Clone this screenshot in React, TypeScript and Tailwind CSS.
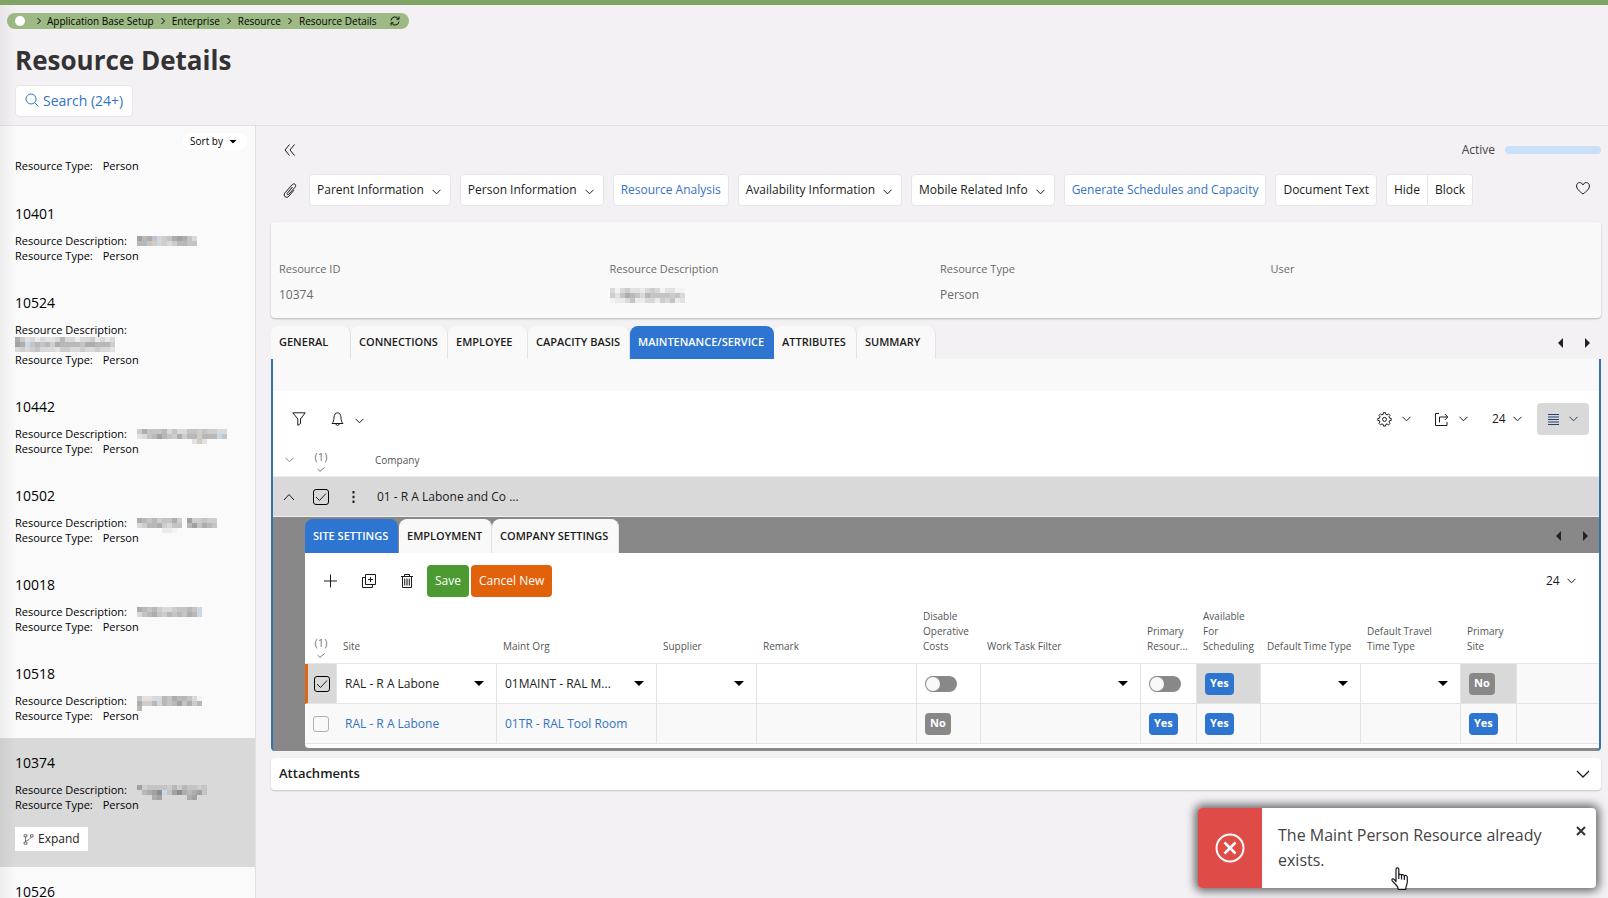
import type { ReactNode } from 'react';

type IconProps = { className?: string };

const Svg = ({ w, h, box, className = '', sw = 1, children }: { w: number; h: number; box?: string; className?: string; sw?: number; children: ReactNode }) => (
  <svg width={w} height={h} viewBox={box ?? `0 0 ${w} ${h}`} className={`shrink-0 ${className}`} fill="none" stroke="currentColor" strokeWidth={sw} aria-hidden="true">
    {children}
  </svg>
);

const Chevron = ({ className = '' }: IconProps) => (
  <Svg w={9} h={6} className={className}><path d="M.5 .8l4 4 4-4" /></Svg>
);
const Caret = ({ className = '' }: IconProps) => (
  <Svg w={10} h={5} className={className}><path d="M0 0h10L5 5z" fill="currentColor" stroke="none" /></Svg>
);
const Arrow = ({ dir }: { dir: 'left' | 'right' }) => (
  <Svg w={5} h={10}><path d={dir === 'left' ? 'M5 0v10L0 5z' : 'M0 0v10l5-5z'} fill="currentColor" stroke="none" /></Svg>
);
const SmallCheck = () => (
  <Svg w={8} h={5}><path d="M.5 2l2.5 2.4L7.5.5" /></Svg>
);

/* Pixelated name: each character is one 5px block, 0 = lightest, 9 = darkest. */
const SHADES: Record<string, string> = {
  '0': '#f3f3f3', '1': '#ebebeb', '2': '#e2e2e3', '3': '#d8d9da', '4': '#cfcdcc',
  '5': '#c4c4c6', '6': '#b9b8b8', '7': '#aeadae', '8': '#a2a0a1', '9': '#8e8d90',
  b: '#c9d8e4', t: '#d5cbc5',
};
const Mosaic = ({ rows, className = '' }: { rows: string[]; className?: string }) => (
  <svg width={rows[0].length * 5} height={rows.length * 5} className={`shrink-0 ${className}`} shapeRendering="crispEdges" role="img" aria-label="Hidden name">
    {rows.map((row, y) =>
      row.split('').map((c, x) => (c === '.' ? null : <rect key={`${x}-${y}`} x={x * 5} y={y * 5} width={5} height={5} fill={SHADES[c]} />)),
    )}
  </svg>
);

const crumbs = ['Application Base Setup', 'Enterprise', 'Resource', 'Resource Details'];

type Item = { id: string; name: string[]; wrap?: boolean; selected?: boolean };
const items: Item[] = [
  { id: '10401', name: ['8675bt578753', '665tb4346655'] },
  { id: '10524', name: ['74231322363313341313', '87b5656476666577666t', '34345333244334334332'], wrap: true },
  { id: '10442', name: ['475556353355454433', '235686547466t666b5', '...........242....'] },
  { id: '10502', name: ['765645574.844544', '346674355.685765', '.....110........'] },
  { id: '10018', name: ['765643345565b', '356754656576b'] },
  { id: '10518', name: ['5223365766530', '7446b656857t6', '6............'] },
  { id: '10374', name: ['84555546465545', '36789b58976785', '...78.....78..'], selected: true },
];

function SidebarLine({ label, children }: { label: string; children?: ReactNode }) {
  return (
    <div className="flex h-[15px] gap-[10px] leading-[15px]">
      <span>{label}</span>
      {children}
    </div>
  );
}

function SidebarItem({ item }: { item: Item }) {
  return (
    <li className={item.selected ? 'bg-[#d9d9d9] px-[15px] pt-4 pb-4' : 'px-[15px] pt-4 pb-[15px]'}>
      <h2 className="mb-[10px] text-[14px] leading-[18px]">{item.id}</h2>
      <SidebarLine label="Resource Description:">{!item.wrap && <Mosaic rows={item.name} className="mt-[3px]" />}</SidebarLine>
      {item.wrap && <Mosaic rows={item.name} />}
      <SidebarLine label="Resource Type:"><span>Person</span></SidebarLine>
      {item.selected && (
        <button type="button" className="mt-[15px] flex h-6 items-center gap-1 bg-white px-2 text-[12px] text-[#222]">
          <Svg w={11} h={11} className="text-[#555]">
            <path d="M2.500 3v5M2.500 7.500l3.500-2 2.500-2.500M1 .8h3v2H1zM1 8.200h3v2H1zM7.500.8h2.500v2.200H7.500z" strokeWidth=".8" />
          </Svg>
          Expand
        </button>
      )}
    </li>
  );
}

function ToolButton({ children, menu, link, className = '' }: { children: ReactNode; menu?: boolean; link?: boolean; className?: string }) {
  return (
    <button
      type="button"
      className={`flex h-8 items-center border border-[#e6e5e8] bg-white px-[7px] text-[12px] whitespace-nowrap ${link ? 'text-[#3372c4]' : 'text-[#1b1b1b]'} ${className || 'rounded'}`}
    >
      {children}
      {menu && <Chevron className="mt-1 mr-[2px] ml-2" />}
    </button>
  );
}

function Tab({ label, active, inner, className = '' }: { label: string; active?: boolean; inner?: boolean; className?: string }) {
  return (
    <button
      type="button"
      role="tab"
      aria-selected={!!active}
      className={`rounded-t-lg px-2 text-left text-[11px] font-semibold whitespace-nowrap ${inner ? 'h-[34px]' : 'h-[33px]'} ${active ? 'bg-[#2d75d0] text-white' : 'border-r border-[#e3e3e3] bg-[#f9f9f9] text-[#1b1b1b]'} ${className}`}
    >
      {label}
    </button>
  );
}

function TickBox({ label, checked }: { label: string; checked?: boolean }) {
  return (
    <span className="inline-grid size-4 place-items-center align-middle">
      <input
        type="checkbox"
        aria-label={label}
        defaultChecked={checked}
        className="peer col-start-1 row-start-1 size-4 appearance-none rounded-[3px] border border-[#b0b0b0] checked:border-black"
      />
      <svg width="12" height="10" viewBox="0 0 12 10" className="pointer-events-none invisible col-start-1 row-start-1 peer-checked:visible" fill="none" stroke="#222" aria-hidden="true">
        <path d="M1 5l3.500 3.500L11 1.500" />
      </svg>
    </span>
  );
}

function Toggle({ label }: { label: string }) {
  return (
    <input
      type="checkbox"
      role="switch"
      aria-label={label}
      className="block h-4 w-8 appearance-none rounded-full bg-[#888] p-px before:block before:size-[14px] before:rounded-full before:bg-[#f9f9f9]"
    />
  );
}

function Pick({ label, value = '' }: { label: string; value?: string }) {
  return (
    <span className="grid items-center">
      <select aria-label={label} className="col-start-1 row-start-1 h-[38px] w-full appearance-none bg-transparent pr-7 pl-2 text-[12px] text-[#222]">
        <option>{value}</option>
      </select>
      <Caret className="pointer-events-none col-start-1 row-start-1 mr-3 justify-self-end text-black" />
    </span>
  );
}

const Badge = ({ yes }: { yes?: boolean }) => (
  <span className={`ml-2 inline-flex h-[22px] items-center rounded px-[5px] align-middle text-[11px] font-bold text-white ${yes ? 'bg-[#2d75d0]' : 'bg-[#888]'}`}>
    {yes ? 'Yes' : 'No'}
  </span>
);

const MenuIcon = ({ label, children }: { label: string; children: ReactNode }) => (
  <button type="button" aria-label={label} className="flex h-8 items-center gap-[10px] text-[12px]">
    {children}
    <Chevron />
  </button>
);

const RowCount = () => (
  <span className="grid items-center">
    <select aria-label="Rows per page" className="col-start-1 row-start-1 h-8 w-[30px] appearance-none bg-transparent text-[12px]"><option>24</option></select>
    <Chevron className="pointer-events-none col-start-1 row-start-1 justify-self-end" />
  </span>
);

const columns: { label: ReactNode; key: string; width: string }[] = [
  { key: 'site', label: 'Site', width: 'w-[160px]' },
  { key: 'org', label: 'Maint Org', width: 'w-[160px]' },
  { key: 'supplier', label: 'Supplier', width: 'w-[100px]' },
  { key: 'remark', label: 'Remark', width: 'w-[160px]' },
  { key: 'disable', label: <>Disable<br />Operative<br />Costs</>, width: 'w-[64px]' },
  { key: 'filter', label: 'Work Task Filter', width: 'w-[160px]' },
  { key: 'primary', label: <>Primary<br />Resour...</>, width: 'w-[56px]' },
  { key: 'available', label: <>Available<br />For<br />Scheduling</>, width: 'w-[64px]' },
  { key: 'time', label: 'Default Time Type', width: 'w-[100px]' },
  { key: 'travel', label: <>Default Travel<br />Time Type</>, width: 'w-[100px]' },
  { key: 'psite', label: <>Primary<br />Site</>, width: 'w-[56px]' },
];

const cell = 'border-r border-b border-[#e4e4e4] p-0';

function SiteTable() {
  return (
    <table className="w-full table-fixed border-separate border-spacing-0 text-[12px]">
      <colgroup>
        <col className="w-[32px]" />
        {columns.map((c) => <col key={c.key} className={c.width} />)}
        <col />
      </colgroup>
      <thead>
        <tr className="h-[60px] text-left align-bottom text-[10px] leading-[15px] text-[#555]">
          <th className="border-b border-[#e4e4e4] p-0 pb-[5px] font-normal">
            <span className="flex flex-col items-center gap-[3px] text-[11px] text-[#777]">(1)<SmallCheck /></span>
          </th>
          {columns.map((c) => (
            <th key={c.key} className="border-b border-[#e4e4e4] p-0 pb-[9px] pl-[6px] font-normal whitespace-nowrap">{c.label}</th>
          ))}
          <th className="border-b border-[#e4e4e4] p-0"></th>
        </tr>
      </thead>
      <tbody>
        <tr className="h-10">
          <td className={`${cell} border-l-[3px] border-l-[#dd6516] bg-[#d9d9d9] text-center`}><TickBox label="Select new row" checked /></td>
          <td className={cell}><Pick label="Site" value="RAL - R A Labone" /></td>
          <td className={cell}><Pick label="Maint Org" value="01MAINT - RAL M..." /></td>
          <td className={cell}><Pick label="Supplier" /></td>
          <td className={cell}><input type="text" aria-label="Remark" className="block h-[38px] w-full bg-transparent px-2" /></td>
          <td className={`${cell} pl-2`}><Toggle label="Disable Operative Costs" /></td>
          <td className={cell}><Pick label="Work Task Filter" /></td>
          <td className={`${cell} pl-2`}><Toggle label="Primary Resource" /></td>
          <td className={`${cell} bg-[#d9d9d9]`}><Badge yes /></td>
          <td className={cell}><Pick label="Default Time Type" /></td>
          <td className={cell}><Pick label="Default Travel Time Type" /></td>
          <td className={`${cell} bg-[#d9d9d9]`}><Badge /></td>
          <td className="border-b border-[#e4e4e4] bg-[#f9f9f9] p-0"></td>
        </tr>
        <tr className="h-10 bg-[#f9f9f9]">
          <td className="border-b border-[#e4e4e4] p-0 text-center"><TickBox label="Select row" /></td>
          <td className={cell}><a href="#site" className="ml-2 text-[#3372c4]">RAL - R A Labone</a></td>
          <td className={cell}><a href="#org" className="ml-2 text-[#3372c4]">01TR - RAL Tool Room</a></td>
          <td className={cell}></td>
          <td className={cell}></td>
          <td className={cell}><Badge /></td>
          <td className={cell}></td>
          <td className={cell}><Badge yes /></td>
          <td className={cell}><Badge yes /></td>
          <td className={cell}></td>
          <td className={cell}></td>
          <td className={cell}><Badge yes /></td>
          <td className="border-b border-[#e4e4e4] p-0"></td>
        </tr>
      </tbody>
    </table>
  );
}

function Toast() {
  return (
    <div role="alert" className="absolute right-3 bottom-[10px] flex h-20 w-[398px] rounded bg-white shadow-[0_0_10px_3px_rgba(0,0,0,0.6)]">
      <div className="flex w-16 shrink-0 items-center justify-center rounded-l bg-[#df4b47] text-white">
        <Svg w={30} h={30} sw={2}>
          <circle cx="15" cy="15" r="13.500" />
          <path d="M9.500 9.500l11 11M20.500 9.500l-11 11" strokeWidth="2.600" />
        </Svg>
      </div>
      <p className="flex-1 pt-[15px] pl-4 text-[16px] leading-[25px] text-[#444]">The Maint Person Resource already exists.</p>
      <button type="button" aria-label="Close" className="mt-[18px] mr-[10px] flex size-[10px] items-center justify-center text-[#333]">
        <Svg w={10} h={10} sw={2}><path d="M1 1l8 8M9 1L1 9" /></Svg>
      </button>
      <svg width="18" height="24" viewBox="0 0 18 24" className="absolute -bottom-[3px] left-[193px]" fill="#fff" stroke="#15151f" strokeWidth="1.200" strokeLinejoin="round" aria-hidden="true">
        <path d="M5 14.500V2.200C5 .4 7.800.4 7.800 2.200V8c.3-1.200 2.600-1 2.700.4.500-1.100 2.700-.9 2.800.6.600-1 2.700-.7 2.900.9.400 4 .3 6.500-.7 8.700-.5 1.100-.7 2-.7 3.800H7.300c0-1.600-.7-2.700-1.700-3.900L1.200 13.800c-.9-1.600.9-2.600 2-1.500z" />
        <path d="M7.800 8v4M10.500 8.500V12.500M13.300 9V13" />
      </svg>
    </div>
  );
}

export default function App() {
  return (
    <div className="relative flex h-screen flex-col overflow-hidden bg-[#f3f1f4] font-['Open_Sans',sans-serif] text-[#1b1b1b]">
      <header className="shrink-0 border-t-[5px] border-[#80a465]">
        <nav aria-label="Breadcrumb" className="mt-2 ml-[7px] flex h-4 w-fit items-center rounded-full bg-[#9dba85] pr-[9px] pl-2 text-[10px] leading-[14px] text-black">
          <span className="mr-3 size-[10px] rounded-full bg-white" />
          {crumbs.map((c, i) => (
            <span key={c} className="flex items-center pb-px">
              <Svg w={4} h={8} className={i ? 'mx-[7px]' : 'mr-[6px]'}><path d="M.5 1l3 3-3 3" /></Svg>
              <a href="#crumb">{c}</a>
            </span>
          ))}
          <Svg w={10} h={10} className="ml-[13px]">
            <path d="M1 4.500A4 4 0 0 1 8.500 3M9 .5V3.200H6.300M9 5.500A4 4 0 0 1 1.500 7M1 9.500V6.800h2.700" strokeWidth=".9" />
          </Svg>
        </nav>
        <h1 className="mt-[14px] ml-[15px] text-[26px] leading-[34px] font-bold text-[#333]">Resource Details</h1>
        <button type="button" className="mt-2 mb-2 ml-[15px] flex h-8 items-center gap-1 rounded border border-[#e6e5e8] bg-white px-[9px] pb-[2px] text-[14px] text-[#3372c4]">
          <Svg w={14} h={14}><circle cx="6" cy="6" r="5" /><path d="M9.700 9.700L13.500 13.500" /></Svg>
          Search (24+)
        </button>
      </header>

      <div className="flex min-h-0 flex-1 border-t border-[#e2e1e4]">
        <aside className="w-[256px] shrink-0 overflow-hidden border-r border-[#e2e1e4] bg-[#fafafa] text-[11px] text-black">
          <div className="mt-[7px] mr-2 flex justify-end">
            <button type="button" className="flex h-[17px] items-center gap-[5px] rounded-full bg-white pr-[9px] pl-2 text-[10px]">Sort by <Caret className="scale-75" /></button>
          </div>
          <div className="px-[15px] pt-2 pb-4">
            <SidebarLine label="Resource Type:"><span>Person</span></SidebarLine>
          </div>
          <ul>
            {items.map((i) => <SidebarItem key={i.id} item={i} />)}
            <li className="px-[15px] pt-4"><h2 className="text-[14px] leading-[18px]">10526</h2></li>
          </ul>
        </aside>

        <main className="min-w-0 flex-1 pr-[7px] pl-[15px]">
          <div className="flex h-12 items-center justify-between pl-[13px]">
            <button type="button" aria-label="Collapse list">
              <Svg w={12} h={12}><path d="M5.500.5L1 6l4.500 5.500M10.500.5L6 6l4.500 5.500" /></Svg>
            </button>
            <div className="flex items-center gap-[10px] text-[12px] text-[#444]">
              Active <span className="h-2 w-24 rounded-full bg-[#cbdff8]" />
            </div>
          </div>

          <div className="flex items-center gap-[9px] pr-[11px] pl-3">
            <button type="button" aria-label="Attachments" className="mr-[3px]">
              <Svg w={14} h={15}><path d="M9.500 4L4.300 10.200c-.8 1 .5 2.100 1.300 1.200L12 4.300C14 2 11.200-.5 9.200 1.700L2 9.800C-.5 12.800 3.300 16 5.800 13.200L11 7.200" /></Svg>
            </button>
            <ToolButton menu>Parent Information</ToolButton>
            <ToolButton menu>Person Information</ToolButton>
            <ToolButton link>Resource Analysis</ToolButton>
            <ToolButton menu>Availability Information</ToolButton>
            <ToolButton menu>Mobile Related Info</ToolButton>
            <ToolButton link>Generate Schedules and Capacity</ToolButton>
            <ToolButton>Document Text</ToolButton>
            <div className="flex">
              <ToolButton className="rounded-l">Hide</ToolButton>
              <ToolButton className="rounded-r border-l-0">Block</ToolButton>
            </div>
            <button type="button" aria-label="Favourite" className="mb-1 ml-auto">
              <Svg w={14} h={13}><path d="M7 12C3 9 .6 6.800.6 4 .6 1.500 2.200.6 3.700.6 5.300.6 6.500 1.600 7 3 7.500 1.600 8.700.6 10.300.6c1.500 0 3.100.9 3.100 3.400C13.400 6.800 11 9 7 12z" /></Svg>
            </button>
          </div>

          <section className="mt-4 grid h-[96px] grid-cols-4 rounded bg-[#f9f9f9] pt-[38px] pl-2 text-[#6a6a6a] shadow-[0_1px_2px_rgba(0,0,0,0.25)]">
            {[['Resource ID', '10374'], ['Resource Description', null], ['Resource Type', 'Person'], ['User', '']].map(([label, value]) => (
              <dl key={label}>
                <dt className="text-[11px] leading-[18px]">{label}</dt>
                <dd className="mt-[9px] text-[12px] leading-[16px]">
                  {value === null ? <Mosaic rows={['303422134302200', '425765365555453', '011351133143512']} className="mt-[10px]" /> : value}
                </dd>
              </dl>
            ))}
          </section>

          <div role="tablist" className="mt-2 flex items-start">
            <Tab label="GENERAL" className="w-[80px]" />
            <Tab label="CONNECTIONS" className="w-[97px]" />
            <Tab label="EMPLOYEE" className="w-[80px]" />
            <Tab label="CAPACITY BASIS" className="w-[102px]" />
            <Tab label="MAINTENANCE/SERVICE" className="w-[144px]" active />
            <Tab label="ATTRIBUTES" className="w-[83px]" />
            <Tab label="SUMMARY" className="w-[79px]" />
            <div className="ml-auto flex h-[33px] items-center gap-[22px] pr-[11px] text-[#222]">
              <button type="button" aria-label="Previous tabs"><Arrow dir="left" /></button>
              <button type="button" aria-label="Next tabs"><Arrow dir="right" /></button>
            </div>
          </div>

          <section className="rounded-b border-x-2 border-[#3672b2] bg-[#888] pb-[3px]">
            <div className="h-8 bg-[#f9f9f9]" />
            <div className="flex h-14 items-center bg-white pr-[10px] pl-[19px]">
              <button type="button" aria-label="Filter">
                <Svg w={14} h={14}><path d="M.8.800h12.400L8.500 7v4.500L5.800 13.300V7z" /></Svg>
              </button>
              <button type="button" aria-label="Notifications" className="ml-[25px] flex items-center gap-[11px]">
                <Svg w={13} h={14}><path d="M1 11.500h11C10.500 10 10.200 8.500 10 5.500 9.800 2.500 8.500.8 6.500.8S3.200 2.500 3 5.500C2.800 8.500 2.500 10 1 11.500zM4.800 12c.3 1.800 3.100 1.800 3.400 0" /></Svg>
                <Chevron className="mt-1" />
              </button>
              <div className="ml-auto flex items-center gap-6">
                <MenuIcon label="Settings">
                  <Svg w={15} h={15}>
                    <path d="M6.500.7h2l.3 1.700 1.300.5 1.400-1 1.500 1.500-1 1.400.5 1.300 1.700.3v2l-1.700.3-.5 1.300 1 1.400-1.500 1.500-1.400-1-1.300.5-.3 1.700h-2l-.3-1.700-1.300-.5-1.400 1L2 11.400l1-1.400-.5-1.300L.8 8.400v-2l1.700-.3L3 4.800 2 3.400l1.500-1.500 1.400 1 1.300-.5z" />
                    <circle cx="7.500" cy="7.400" r="2" />
                  </Svg>
                </MenuIcon>
                <MenuIcon label="Export">
                  <Svg w={14} h={13}><path d="M4 .5H.5v12h11.500V9M4.500 9.500V4h8M9.800 1l3 3-3 3" /></Svg>
                </MenuIcon>
                <RowCount />
                <button type="button" aria-label="List view" className="-ml-[9px] flex h-8 w-[52px] items-center justify-center gap-[10px] rounded bg-[#d9d9d9] text-[#22406e]">
                  <Svg w={11} h={11}><path d="M0 .5h11M0 3h11M0 5.500h11M0 8h11M0 10.500h11" /></Svg>
                  <Chevron />
                </button>
              </div>
            </div>
            <div className="flex h-[29px] items-center bg-white pb-[3px] pl-3 text-[11px] text-[#555]">
              <Chevron className="text-[#888]" />
              <span className="ml-[19px] flex w-[16px] flex-col items-center gap-[3px] leading-[15px] text-[#777]">(1)<SmallCheck /></span>
              <span className="ml-[46px] text-[10px]">Company</span>
            </div>
            <div className="flex h-[41px] items-center border-y border-[#eee] bg-[#d9d9d9] pl-[10px]">
              <button type="button" aria-label="Collapse row"><Svg w={12} h={8}><path d="M1 7l5-5.500L11 7" /></Svg></button>
              <span className="ml-[18px] flex"><TickBox label="Select company" checked /></span>
              <button type="button" aria-label="Row actions" className="ml-[23px]">
                <Svg w={3} h={12}><path d="M1.500 0v2.500M1.500 4.800v2.500M1.500 9.500V12" strokeWidth="2" /></Svg>
              </button>
              <span className="ml-[22px] text-[12px]">01 - R A Labone and Co ...</span>
            </div>
            <div className="pt-[2px] pl-8">
              <div role="tablist" className="flex items-center">
                <Tab label="SITE SETTINGS" className="w-[93px]" inner active />
                <Tab label="EMPLOYMENT" className="ml-px w-[93px]" inner />
                <Tab label="COMPANY SETTINGS" className="w-[127px]" inner />
                <div className="ml-auto flex items-center gap-[22px] pr-[11px] text-[#222]">
                  <button type="button" aria-label="Previous tabs"><Arrow dir="left" /></button>
                  <button type="button" aria-label="Next tabs"><Arrow dir="right" /></button>
                </div>
              </div>
              <div className="rounded-bl bg-white pb-1">
                <div className="flex h-[51px] items-center pt-1 pr-[23px] pl-[19px]">
                  <button type="button" aria-label="Add"><Svg w={14} h={14}><path d="M6.500.5v13M0 7h13" /></Svg></button>
                  <button type="button" aria-label="Duplicate" className="ml-6">
                    <Svg w={14} h={14}><path d="M3.500.5h10v10h-10zM3.500 3.500h-3v10h10v-3M8.500 3v5M6 5.500h5" /></Svg>
                  </button>
                  <button type="button" aria-label="Delete" className="mr-[14px] ml-[25px]">
                    <Svg w={12} h={14}><path d="M0 2.500h12M3.500 2.500v-2h5v2M1.500 2.500v11h9v-11" /><path d="M3.500 4.500v7M5.200 4.500v7M6.800 4.500v7M8.500 4.500v7" strokeWidth=".8" /></Svg>
                  </button>
                  <button type="button" className="h-8 rounded bg-[#4b9a32] px-2 text-[12px] font-medium text-white">Save</button>
                  <button type="button" className="ml-[2px] h-8 rounded bg-[#e2610b] px-2 text-[12px] font-medium text-white">Cancel New</button>
                  <span className="ml-auto"><RowCount /></span>
                </div>
                <SiteTable />
              </div>
            </div>
          </section>

          <button type="button" className="mt-[7px] flex h-8 w-full items-center justify-between rounded bg-white pr-[11px] pl-2 text-[13px] font-semibold shadow-[0_1px_2px_rgba(0,0,0,0.2)]">
            Attachments
            <Svg w={14} h={8}><path d="M1 1l6 6 6-6" strokeWidth="1.300" /></Svg>
          </button>
        </main>
      </div>

      <div className="pointer-events-none absolute top-[5px] bottom-0 left-0 w-4 bg-linear-to-r from-black/5 to-transparent" />
      <Toast />
    </div>
  );
}
